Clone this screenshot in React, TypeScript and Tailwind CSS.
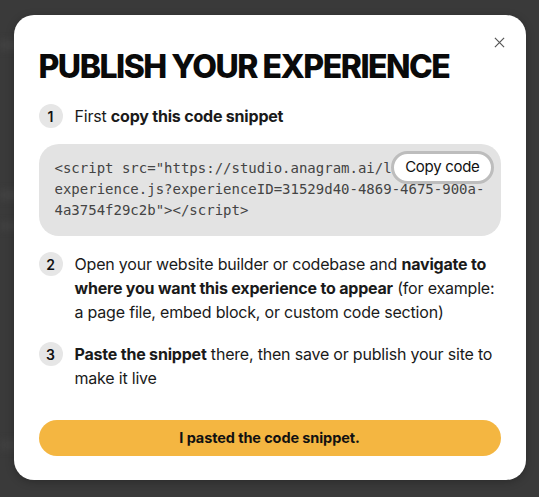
import React from "react";

function Step({ n, children }: { n: number; children: React.ReactNode }) {
  return (
    <div className="flex gap-3 items-start">
      <div className="w-6 h-6 shrink-0 rounded-full bg-[#e6e6e6] flex items-center justify-center text-[14px] font-semibold text-[#111]">
        {n}
      </div>
      <div className="text-[16px] leading-[24px] text-[#1a1a1a] tracking-[-0.2px]">{children}</div>
    </div>
  );
}

export default function App() {
  return (
    <div
      className="w-[539px] h-[497px] bg-[#3a3a3a] relative overflow-hidden flex justify-center pt-[15px]"
      style={{ fontFamily: "Inter, 'Noto Sans', sans-serif" }}
    >
      <div className="absolute left-0 top-[40px] w-[30px] h-[10px] bg-[#424242] blur-[3px]" />
      <div className="absolute left-0 top-[190px] w-[30px] h-[10px] bg-[#424242] blur-[3px]" />
      <div className="absolute left-0 top-[222px] w-[30px] h-[8px] bg-[#414141] blur-[3px]" />
      <div className="absolute left-0 top-[440px] w-[30px] h-[10px] bg-[#404040] blur-[3px]" />
      <div className="relative w-[512px] h-[465px] bg-white rounded-[20px] px-[25px] pt-[32px] pb-[24px] flex flex-col shadow-[0_2px_8px_rgba(0,0,0,0.25)]">
        <button className="absolute right-[18px] top-[19px] w-4 h-4 flex items-center justify-center text-[#555]">
          <svg width="11" height="11" viewBox="0 0 12 12" fill="none" stroke="currentColor" strokeWidth="1.3">
            <path d="M1 1L11 11M11 1L1 11" />
          </svg>
        </button>
        <h1 className="text-[32px] leading-[40px] font-extrabold text-[#0a0a0a] tracking-[-1.5px]">
          PUBLISH YOUR EXPERIENCE
        </h1>
        <div className="mt-[17px]">
          <Step n={1}>
            First <span className="font-bold">copy this code snippet</span>
          </Step>
        </div>
        <div className="relative mt-[16px] h-[92px] bg-[#e3e3e3] rounded-[20px] pl-[16px] pr-[10px] pt-[14px]">
          <pre
            className="text-[14px] leading-[21px] text-[#444] whitespace-pre"
            style={{ fontFamily: "'DejaVu Sans Mono', monospace" }}
          >
{`<script src="https://studio.anagram.ai/l
experience.js?experienceID=31529d40-4869-4675-900a-
4a3754f29c2b"></script>`}
          </pre>
          <button className="absolute right-[7px] top-[7px] h-[33px] px-[11px] bg-white rounded-full border-[3px] border-[#bdbdbd] text-[15px] text-[#111] tracking-[-0.3px]">
            Copy code
          </button>
        </div>
        <div className="mt-[16px]">
          <Step n={2}>
            Open your website builder or codebase and{" "}
            <span className="font-bold">navigate to where you want this experience to appear</span> (for
            example: a page file, embed block, or custom code section)
          </Step>
        </div>
        <div className="mt-[18px]">
          <Step n={3}>
            <span className="font-bold">Paste the snippet</span> there, then save or publish your site to
            make it live
          </Step>
        </div>
        <button className="mt-auto h-[36px] w-full rounded-full bg-[#f4b641] text-[14.5px] font-bold text-[#111] tracking-[-0.1px]">
          I pasted the code snippet.
        </button>
      </div>
    </div>
  );
}
